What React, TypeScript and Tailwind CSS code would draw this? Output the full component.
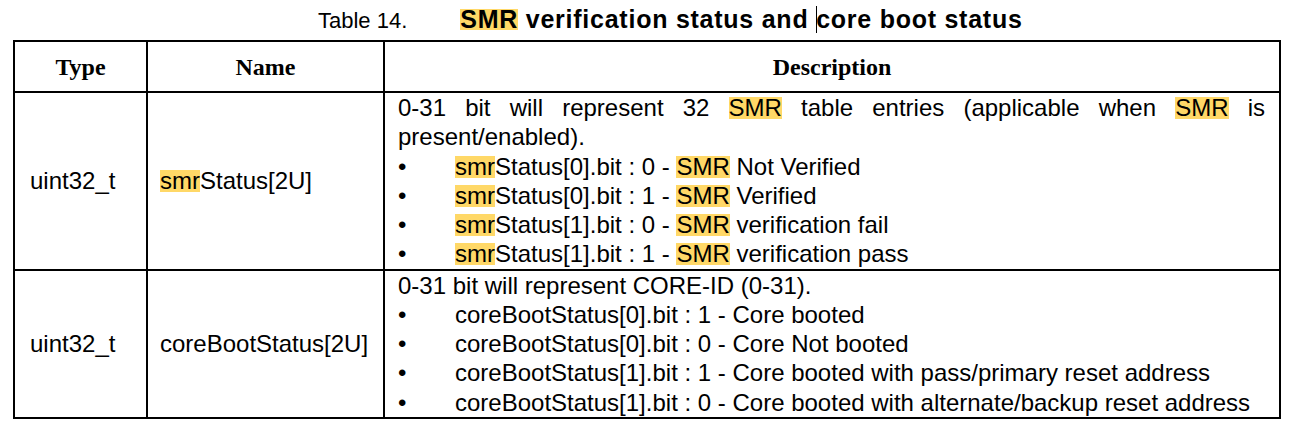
import React from "react";

const Hl = ({ children }: { children: React.ReactNode }) => (
  <span className="inline-block h-[22px] bg-[#ffd867] leading-[22px]">
    {children}
  </span>
);

const Bullet = ({ children }: { children: React.ReactNode }) => (
  <div className="flex">
    <span className="w-[57px] shrink-0">•</span>
    <span>{children}</span>
  </div>
);

const smrItems = [
  ["0", "0", "Not Verified"],
  ["0", "1", "Verified"],
  ["1", "0", "verification fail"],
  ["1", "1", "verification pass"],
];

const coreItems = [
  "coreBootStatus[0].bit : 1 - Core booted",
  "coreBootStatus[0].bit : 0 - Core Not booted",
  "coreBootStatus[1].bit : 1 - Core booted with pass/primary reset address",
  "coreBootStatus[1].bit : 0 - Core booted with alternate/backup reset address",
];

export default function App() {
  return (
    <div className="h-[424px] w-[1316px] bg-white font-['Liberation_Sans',Arial,sans-serif] text-[24px] text-black">
      {/* caption */}
      <div className="h-[40px] pl-[318px] leading-[38px] whitespace-nowrap">
        <span className="text-[22px]">Table 14.</span>
        <span className="ml-[53px] text-[25px] font-bold tracking-[0.75px]">
          <span className="inline-block h-[21px] bg-[#ffd867] leading-[20px]">SMR</span>{" "}
          verification status and{" "}
          <span className="-mr-px inline-block h-[27px] w-px bg-black align-[-5px]" />
          core boot status
        </span>
      </div>

      <div className="ml-[13px] w-[1268px] border-2 border-black">
        {/* header */}
        <div className="flex h-[51px] border-b-2 border-black font-['Liberation_Serif','Times_New_Roman',serif] font-bold">
          <div className="flex w-[133px] items-center justify-center border-r-2 border-black">Type</div>
          <div className="flex w-[237px] items-center justify-center border-r-2 border-black">Name</div>
          <div className="flex flex-1 items-center justify-center">Description</div>
        </div>

        {/* smrStatus */}
        <div className="flex border-b-2 border-black leading-[29.25px]">
          <div className="flex w-[133px] items-center border-r-2 border-black pl-[15px]">uint32_t</div>
          <div className="flex w-[237px] items-center border-r-2 border-black pl-[12px]">
            <span>
              <Hl>smr</Hl>Status[2U]
            </span>
          </div>
          <div className="flex-1 pl-[13px] pr-[14px]">
            <p className="text-justify">
              0-31 bit will represent 32 <Hl>SMR</Hl> table entries (applicable when <Hl>SMR</Hl> is{" "}
              <span className="whitespace-nowrap">present/enabled).</span>
            </p>
            {smrItems.map(([idx, bit, label]) => (
              <Bullet key={idx + bit}>
                <Hl>smr</Hl>Status[{idx}].bit : {bit} - <Hl>SMR</Hl> {label}
              </Bullet>
            ))}
          </div>
        </div>

        {/* coreBootStatus */}
        <div className="flex leading-[29.25px]">
          <div className="flex w-[133px] items-center border-r-2 border-black pl-[15px]">uint32_t</div>
          <div className="flex w-[237px] items-center border-r-2 border-black pl-[12px]">coreBootStatus[2U]</div>
          <div className="flex-1 pl-[13px] pr-[14px]">
            <p>0-31 bit will represent CORE-ID (0-31).</p>
            {coreItems.map((t) => (
              <Bullet key={t}>{t}</Bullet>
            ))}
          </div>
        </div>
      </div>
    </div>
  );
}
